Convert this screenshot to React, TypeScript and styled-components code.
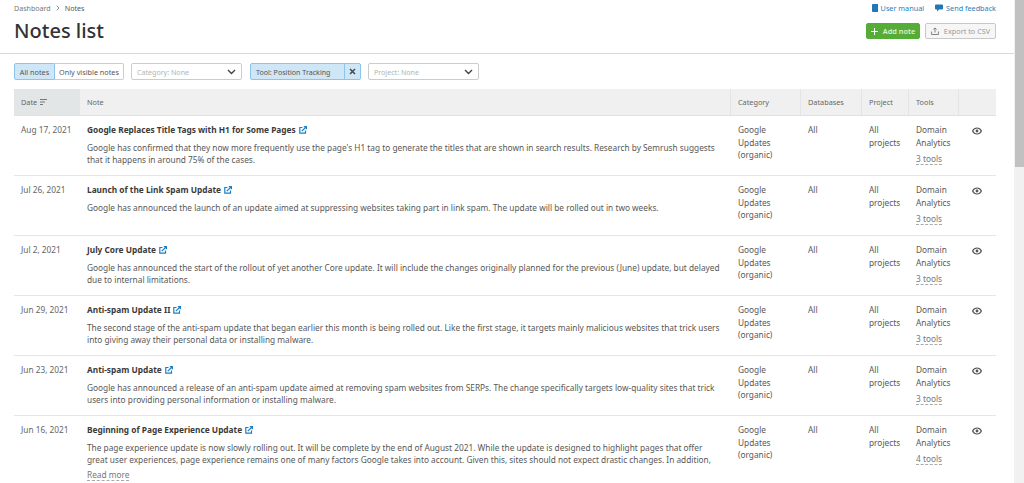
import React from 'react';
import styled, { createGlobalStyle } from 'styled-components';

const GlobalStyle = createGlobalStyle`
  html, body {
    margin: 0;
    height: 483px;
    overflow: hidden;
    background: #fff;
  }
  * { box-sizing: border-box; }
`;

const Page = styled.div`
  display: flex;
  height: 483px;
  font-family: 'Noto Sans', 'Open Sans', sans-serif;
  font-size: 8.3px;
  color: #585858;
`;

const Main = styled.main`
  width: 1014px;
  overflow: hidden;
`;

const ScrollTrack = styled.div`
  width: 10px;
  padding-left: 1px;
  background: #f1f1f1;
`;

const ScrollThumb = styled.div`
  height: 167px;
  background: #c1c1c1;
`;

const Header = styled.header`
  height: 54px;
  padding: 3px 18px 0 14px;
  border-bottom: 1px solid #d9d9d9;
  display: flex;
  justify-content: space-between;
`;

const Crumbs = styled.div`
  display: flex;
  align-items: center;
  gap: 5px;
  height: 10px;
  font-size: 7.1px;
  color: #777;
`;

const CrumbCurrent = styled.span`
  color: #555;
`;

const Title = styled.h1`
  margin: 4px 0 0;
  font-size: 20px;
  line-height: 28px;
  font-weight: 500;
  color: #333;
`;

const HeadRight = styled.div`
  display: flex;
  flex-direction: column;
  align-items: flex-end;
`;

const HelpLinks = styled.div`
  display: flex;
  gap: 11px;
  height: 10px;
  align-items: center;
`;

const HelpLink = styled.a`
  display: flex;
  align-items: center;
  gap: 3px;
  font-size: 7.25px;
  color: #2a80b9;
`;

const Actions = styled.div`
  display: flex;
  gap: 5px;
  margin-top: 10px;
`;

const Button = styled.button<{ $primary?: boolean }>`
  display: flex;
  align-items: center;
  justify-content: center;
  gap: 5px;
  height: 16px;
  padding: 0;
  width: ${(p) => (p.$primary ? '54px' : '71px')};
  border-radius: 2px;
  border: 1px solid ${(p) => (p.$primary ? '#55ac36' : '#c8c8c8')};
  background: ${(p) => (p.$primary ? '#55ac36' : '#f6f6f6')};
  color: ${(p) => (p.$primary ? '#dff0d6' : '#999')};
  font-family: inherit;
  font-size: 7.3px;
  font-weight: ${(p) => (p.$primary ? 600 : 400)};
`;

const Filters = styled.div`
  display: flex;
  align-items: center;
  height: 35px;
  padding-left: 14px;
`;

const Segmented = styled.div`
  display: flex;
  height: 17px;
  width: 110px;
  margin-right: 7px;
`;

const Segment = styled.div<{ $active?: boolean }>`
  display: flex;
  align-items: center;
  justify-content: center;
  flex: ${(p) => (p.$active ? '0 0 41px' : '1')};
  font-size: 7.25px;
  color: #555;
  border: 1px solid ${(p) => (p.$active ? '#8fc4ea' : '#ccc')};
  border-left-width: ${(p) => (p.$active ? '1px' : '0')};
  background: ${(p) => (p.$active ? '#cfe6f7' : '#fff')};
  border-radius: ${(p) => (p.$active ? '2px 0 0 2px' : '0 2px 2px 0')};
`;

const Select = styled.div`
  display: flex;
  align-items: center;
  justify-content: space-between;
  width: 111px;
  height: 17px;
  margin-right: 8px;
  padding: 0 5px 0 5px;
  border: 1px solid #ccc;
  border-radius: 2px;
  color: #b0b5b5;
  font-size: 7.1px;
`;

const ToolFilter = styled.div`
  display: flex;
  width: 111px;
  height: 17px;
  margin-right: 7px;
  border: 1px solid #8fc4ea;
  border-radius: 2px;
  background: #cfe6f7;
  font-size: 7.1px;
  color: #555;
`;

const ToolLabel = styled.div`
  flex: 1;
  display: flex;
  align-items: center;
  padding-left: 5px;
`;

const ToolClear = styled.div`
  width: 16px;
  display: flex;
  align-items: center;
  justify-content: center;
  border-left: 1px solid #8fc4ea;
`;

const Table = styled.div`
  width: 982px;
  margin-left: 14px;
`;

const grid = `
  display: grid;
  grid-template-columns: 66px 651px 70px 61px 47px 50px 37px;
`;

const HeadRow = styled.div`
  ${grid}
  height: 27px;
  background: #f0f0f0;
  border-bottom: 1px solid #e0e0e0;
  font-size: 7.3px;
  color: #666;
`;

const HeadCell = styled.div<{ $sorted?: boolean }>`
  display: flex;
  align-items: center;
  gap: 3px;
  padding-left: 7px;
  background: ${(p) => (p.$sorted ? '#e3e6e6' : 'transparent')};
  border-right: 1px solid ${(p) => (p.$sorted ? 'transparent' : '#e4e4e4')};
  &:last-child { border-right: 0; }
`;

const Row = styled.div`
  ${grid}
  min-height: 60px;
  padding-top: 8px;
  border-bottom: 1px solid #e6e6e6;
  line-height: 12.5px;
  &:last-child { border-bottom: 0; }
`;

const Cell = styled.div`
  padding-left: 7px;
`;

const DateCell = styled(Cell)`
  color: #666;
`;

const NoteTitle = styled.div`
  display: flex;
  align-items: center;
  gap: 3px;
  height: 12px;
  font-weight: 700;
  color: #3a3a3a;
`;

const NoteText = styled.p`
  margin: 5.5px 0 0;
  padding-right: 6px;
`;

const Dashed = styled.a`
  display: inline-block;
  margin-top: 5px;
  line-height: 10px;
  color: #777;
  border-bottom: 1px dashed #aaa;
`;

const ReadMore = styled(Dashed)`
  margin-top: 3px;
`;

const EyeCell = styled.div`
  padding: 2px 0 0 13px;
`;

const Chevron = () => (
  <svg width="9" height="6" viewBox="0 0 9 6" fill="none">
    <path d="M1 1l3.5 3.5L8 1" stroke="#444" strokeWidth="1.4" />
  </svg>
);

const ExternalIcon = () => (
  <svg width="8" height="8" viewBox="0 0 8 8" fill="none" stroke="#1a7fc4" strokeWidth="1.2">
    <path d="M3.5 1.5H.8v5.7h5.7V4.500" />
    <path d="M2.800 5.200L6.500 1.500" />
    <path d="M4.300 0h3.700v3.700z" fill="#1a7fc4" stroke="none" />
  </svg>
);

const EyeIcon = () => (
  <svg width="10" height="8" viewBox="0 0 10 8" fill="none">
    <path d="M.6 4C1.600 2 3.100 1 5 1s3.400 1 4.400 3C8.400 6 6.900 7 5 7S1.600 6 .6 4z" stroke="#555" strokeWidth="1.200" />
    <circle cx="5" cy="4" r="1.400" fill="#555" />
  </svg>
);

const notes = [
  {
    date: 'Aug 17, 2021',
    title: 'Google Replaces Title Tags with H1 for Some Pages',
    text: "Google has confirmed that they now more frequently use the page's H1 tag to generate the titles that are shown in search results. Research by Semrush suggests that it happens in around 75% of the cases.",
    tools: '3 tools',
  },
  {
    date: 'Jul 26, 2021',
    title: 'Launch of the Link Spam Update',
    text: 'Google has announced the launch of an update aimed at suppressing websites taking part in link spam. The update will be rolled out in two weeks.',
    tools: '3 tools',
  },
  {
    date: 'Jul 2, 2021',
    title: 'July Core Update',
    text: 'Google has announced the start of the rollout of yet another Core update. It will include the changes originally planned for the previous (June) update, but delayed due to internal limitations.',
    tools: '3 tools',
  },
  {
    date: 'Jun 29, 2021',
    title: 'Anti-spam Update II',
    text: 'The second stage of the anti-spam update that began earlier this month is being rolled out. Like the first stage, it targets mainly malicious websites that trick users into giving away their personal data or installing malware.',
    tools: '3 tools',
  },
  {
    date: 'Jun 23, 2021',
    title: 'Anti-spam Update',
    text: 'Google has announced a release of an anti-spam update aimed at removing spam websites from SERPs. The change specifically targets low-quality sites that trick users into providing personal information or installing malware.',
    tools: '3 tools',
  },
  {
    date: 'Jun 16, 2021',
    title: 'Beginning of Page Experience Update',
    text: 'The page experience update is now slowly rolling out. It will be complete by the end of August 2021. While the update is designed to highlight pages that offer great user experiences, page experience remains one of many factors Google takes into account. Given this, sites should not expect drastic changes. In addition,',
    tools: '4 tools',
    more: true,
  },
];

const App = () => {
  return (
    <Page>
      <GlobalStyle />
      <Main>
        <Header>
          <div>
            <Crumbs>
              <span>Dashboard</span>
              <svg width="4" height="6" viewBox="0 0 4 6" fill="none">
                <path d="M.7.7L3 3 .7 5.300" stroke="#777" strokeWidth=".8" />
              </svg>
              <CrumbCurrent>Notes</CrumbCurrent>
            </Crumbs>
            <Title>Notes list</Title>
          </div>
          <HeadRight>
            <HelpLinks>
              <HelpLink>
                <svg width="6" height="8" viewBox="0 0 6 8">
                  <path d="M0 1a1 1 0 011-1h5v8H1a1 1 0 01-1-1z" fill="#1f78b8" />
                </svg>
                User manual
              </HelpLink>
              <HelpLink>
                <svg width="8" height="8" viewBox="0 0 8 8">
                  <path d="M1 .5h6a1 1 0 011 1v3a1 1 0 01-1 1H4L2 7.500V5.500H1a1 1 0 01-1-1v-3a1 1 0 011-1z" fill="#1f78b8" />
                </svg>
                Send feedback
              </HelpLink>
            </HelpLinks>
            <Actions>
              <Button $primary>
                <svg width="7" height="7" viewBox="0 0 7 7">
                  <path d="M3 0h1v3h3v1H4v3H3V4H0V3h3z" fill="#fff" />
                </svg>
                Add note
              </Button>
              <Button>
                <svg width="8" height="8" viewBox="0 0 8 8" fill="none" stroke="#777" strokeWidth=".9">
                  <path d="M4 5.500V1M2.300 2.600L4 .9l1.700 1.700M.6 4.500v3h6.800v-3" />
                </svg>
                Export to CSV
              </Button>
            </Actions>
          </HeadRight>
        </Header>
        <Filters>
          <Segmented>
            <Segment $active>All notes</Segment>
            <Segment>Only visible notes</Segment>
          </Segmented>
          <Select>
            Category: None
            <Chevron />
          </Select>
          <ToolFilter>
            <ToolLabel>Tool: Position Tracking</ToolLabel>
            <ToolClear>
              <svg width="7" height="7" viewBox="0 0 7 7" fill="none">
                <path d="M1 1l5 5M6 1L1 6" stroke="#3f4a50" strokeWidth="1.500" />
              </svg>
            </ToolClear>
          </ToolFilter>
          <Select>
            Project: None
            <Chevron />
          </Select>
        </Filters>
        <Table>
          <HeadRow>
            <HeadCell $sorted>
              Date
              <svg width="8" height="7" viewBox="0 0 8 7" fill="#777">
                <rect width="7" height="1" />
                <rect y="2.500" width="5" height="1" />
                <rect y="5" width="3" height="1" />
              </svg>
            </HeadCell>
            <HeadCell>Note</HeadCell>
            <HeadCell>Category</HeadCell>
            <HeadCell>Databases</HeadCell>
            <HeadCell>Project</HeadCell>
            <HeadCell>Tools</HeadCell>
            <HeadCell />
          </HeadRow>
          {notes.map((note) => (
            <Row key={note.title}>
              <DateCell>{note.date}</DateCell>
              <Cell>
                <NoteTitle>
                  {note.title}
                  <ExternalIcon />
                </NoteTitle>
                <NoteText>{note.text}</NoteText>
                {note.more && <ReadMore>Read more</ReadMore>}
              </Cell>
              <Cell>
                Google
                <br />
                Updates
                <br />
                (organic)
              </Cell>
              <Cell>All</Cell>
              <Cell>
                All
                <br />
                projects
              </Cell>
              <Cell>
                Domain
                <br />
                Analytics
                <br />
                <Dashed>{note.tools}</Dashed>
              </Cell>
              <EyeCell>
                <EyeIcon />
              </EyeCell>
            </Row>
          ))}
        </Table>
      </Main>
      <ScrollTrack>
        <ScrollThumb />
      </ScrollTrack>
    </Page>
  );
};

export default App;
